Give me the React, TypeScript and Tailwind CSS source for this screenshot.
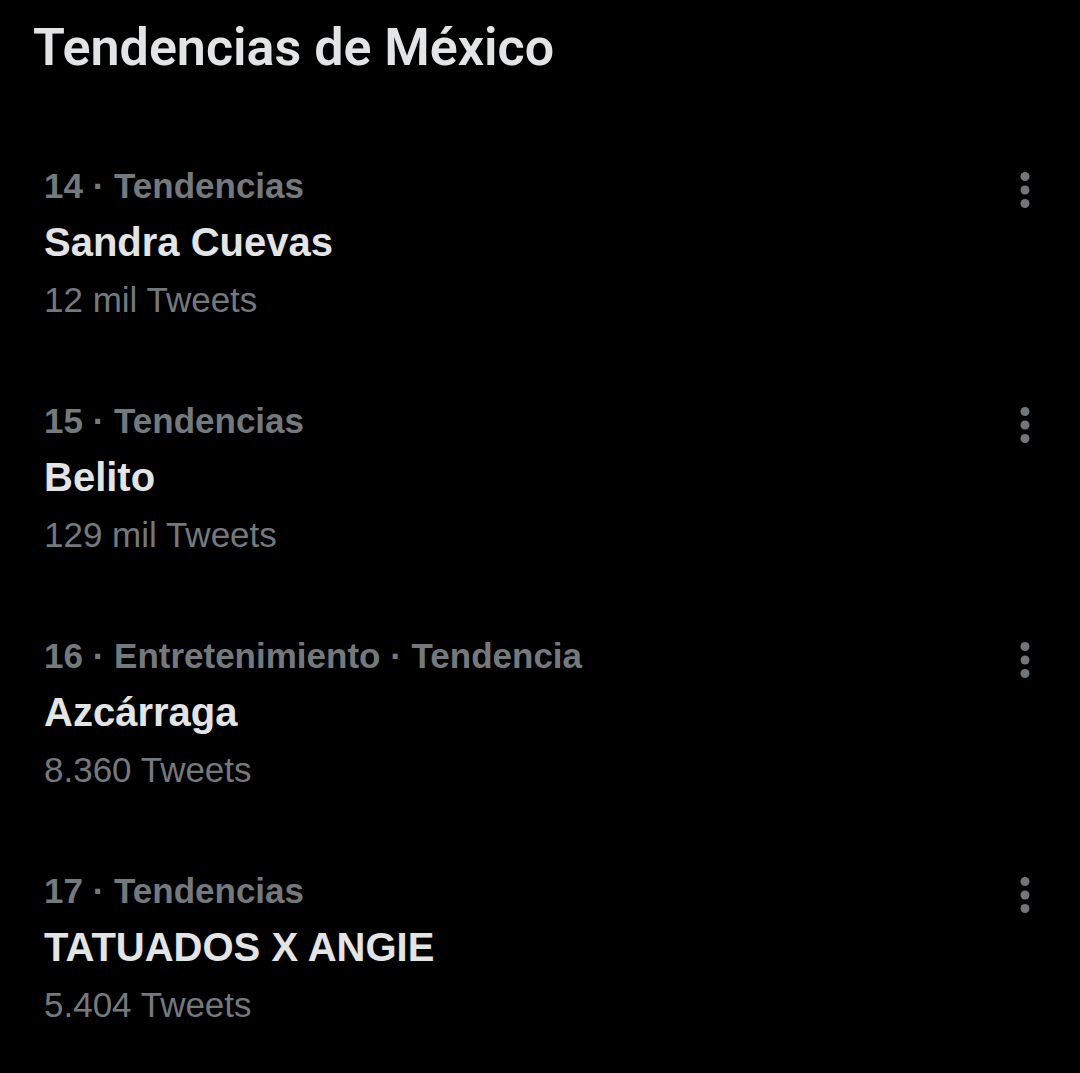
import React from 'react';

const trends = [
  { meta: '14 · Tendencias', name: 'Sandra Cuevas', count: '12 mil Tweets' },
  { meta: '15 · Tendencias', name: 'Belito', count: '129 mil Tweets' },
  { meta: '16 · Entretenimiento · Tendencia', name: 'Azcárraga', count: '8.360 Tweets' },
  { meta: '17 · Tendencias', name: 'TATUADOS X ANGIE', count: '5.404 Tweets' },
];

const MoreIcon = () => (
  <svg width="14" height="36" viewBox="0 0 14 36" className="fill-[#71767b]">
    <circle cx="7" cy="4.5" r="4.5" />
    <circle cx="7" cy="18" r="4.5" />
    <circle cx="7" cy="31.5" r="4.5" />
  </svg>
);

export default function App() {
  return (
    <div className="w-[1080px] h-[1073px] bg-black overflow-hidden">
      <h1 className="pl-[33px] pt-[16px] h-[125px] text-[#e2e4e5] text-[52px] leading-[64px] font-semibold font-['Roboto',sans-serif]">
        Tendencias de México
      </h1>
      <div className="flex flex-col">
        {trends.map((t, i) => (
          <div key={i} className="flex justify-between pl-[44px] pr-[48px] py-[32px] font-['Liberation_Sans',sans-serif]">
            <div className="flex flex-col">
              <span className="text-[#74797e] text-[35px] leading-[57px] font-bold">{t.meta}</span>
              <span className="text-[#e2e4e5] text-[40px] leading-[57px] font-bold">{t.name}</span>
              <span className="text-[#74797e] text-[35px] leading-[57px]">{t.count}</span>
            </div>
            <div className="pt-[15px]">
              <MoreIcon />
            </div>
          </div>
        ))}
      </div>
    </div>
  );
}
